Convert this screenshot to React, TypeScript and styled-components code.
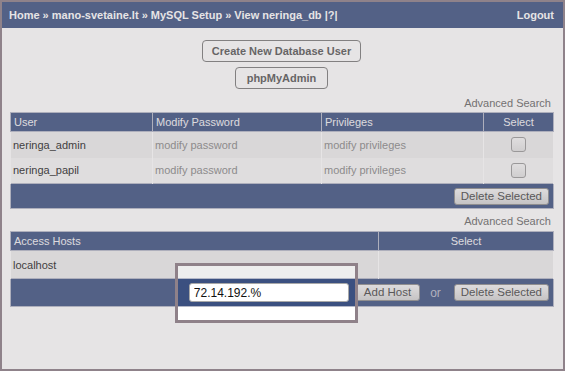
import React from 'react'
import styled, { createGlobalStyle } from 'styled-components'

const GlobalStyle = createGlobalStyle`
  html, body {
    margin: 0;
    padding: 0;
    background: #ffffff;
  }
  body {
    font-family: "Liberation Sans", Arial, sans-serif;
  }
`

const BLUE = '#3b5080'

const Frame = styled.div`
  position: relative;
  width: 565px;
  height: 371px;
  box-sizing: border-box;
  border: 2px solid #8f828a;
  background: #ffffff;
  overflow: hidden;
`

const TopBar = styled.div`
  height: 26px;
  background: ${BLUE};
  display: flex;
  align-items: center;
  justify-content: space-between;
  padding: 0 9px 0 7px;
  color: #ffffff;
  font-size: 11px;
  font-weight: bold;
`

const Content = styled.div`
  padding: 12px 10px 0 8px;
`

const ButtonStack = styled.div`
  display: flex;
  flex-direction: column;
  align-items: center;
  gap: 5px;
`

const PlainButton = styled.button<{ $pad: number }>`
  height: 22px;
  padding: 0 ${p => p.$pad}px;
  border: 1px solid #7a7a7a;
  border-radius: 4px;
  background: transparent;
  color: #555555;
  font-family: "Liberation Sans", Arial, sans-serif;
  font-size: 11px;
  font-weight: bold;
`

const AdvancedSearch = styled.div<{ $top: number; $bottom: number }>`
  margin-top: ${p => p.$top}px;
  margin-bottom: ${p => p.$bottom}px;
  text-align: right;
  font-size: 11px;
  line-height: 14px;
  color: #666666;
  padding-right: 2px;
`

const Table = styled.table`
  width: 543px;
  table-layout: fixed;
  border-collapse: collapse;
  font-size: 11px;
`

const HeadCell = styled.th<{ $center?: boolean }>`
  height: 18px;
  padding: 0 3px;
  background: ${BLUE};
  border: 1px solid #b4b8c8;
  color: #f2f2f6;
  font-weight: normal;
  text-align: ${p => (p.$center ? 'center' : 'left')};
`

const Row = styled.tr<{ $alt?: boolean; $height: number }>`
  height: ${p => p.$height}px;
  background: ${p => (p.$alt ? '#f6f6f6' : '#eeeeee')};
`

const Cell = styled.td<{ $muted?: boolean; $center?: boolean }>`
  padding: 0 3px 0 2px;
  border-left: 1px solid #ffffff;
  border-right: 1px solid #ffffff;
  color: ${p => (p.$muted ? '#888888' : '#222222')};
  text-align: ${p => (p.$center ? 'center' : 'left')};
  vertical-align: middle;
`

const FootCell = styled.td<{ $height: number }>`
  height: ${p => p.$height}px;
  padding: 0 4px 0 0;
  background: ${BLUE};
  border: 1px solid #b4b8c8;
`

const FootBar = styled.div`
  display: flex;
  align-items: center;
  justify-content: flex-end;
`

const GrayButton = styled.button<{ $gap?: number; $pad?: number }>`
  height: 17px;
  margin-left: ${p => p.$gap ?? 0}px;
  padding: 0 ${p => p.$pad ?? 6}px;
  border: 1px solid #8c8c8c;
  border-radius: 3px;
  background: linear-gradient(#f4f4f4, #d4d4d4);
  color: #444444;
  font-family: "Liberation Sans", Arial, sans-serif;
  font-size: 11.5px;
  line-height: 15px;
`

const Check = styled.input.attrs({ type: 'checkbox' })`
  appearance: none;
  display: block;
  margin: 0 auto;
  width: 15px;
  height: 15px;
  box-sizing: border-box;
  border: 1px solid #9a9a9a;
  border-radius: 3px;
  background: linear-gradient(#f6f6f6, #e2e2e2);
`

const HostInput = styled.input`
  width: 160px;
  height: 19px;
  box-sizing: border-box;
  padding: 0 4px;
  border: 1px solid #a8a8a8;
  border-radius: 3px;
  background: #ffffff;
  color: #111111;
  font-family: "Liberation Sans", Arial, sans-serif;
  font-size: 12px;
  outline: none;
`

const OrText = styled.span`
  margin: 0 13px 0 10px;
  color: #b8bccb;
  font-size: 12px;
`

const Spotlight = styled.div`
  position: absolute;
  left: 173px;
  top: 261px;
  width: 183px;
  height: 60px;
  box-sizing: border-box;
  border: 3px solid #8f8189;
  box-shadow: 0 0 0 1200px rgba(156, 147, 151, 0.25);
  pointer-events: none;
`

const users = ['neringa_admin', 'neringa_papil']

export default function App() {
  return (
    <Frame>
      <GlobalStyle />
      <TopBar>
        <span>Home » mano-svetaine.lt » MySQL Setup » View neringa_db |?|</span>
        <span>Logout</span>
      </TopBar>
      <Content>
        <ButtonStack>
          <PlainButton $pad={9}>Create New Database User</PlainButton>
          <PlainButton $pad={11}>phpMyAdmin</PlainButton>
        </ButtonStack>

        <AdvancedSearch $top={7} $bottom={2}>Advanced Search</AdvancedSearch>
        <Table>
          <colgroup>
            <col style={{ width: 142 }} />
            <col style={{ width: 169 }} />
            <col style={{ width: 162 }} />
            <col style={{ width: 70 }} />
          </colgroup>
          <thead>
            <tr>
              <HeadCell>User</HeadCell>
              <HeadCell>Modify Password</HeadCell>
              <HeadCell>Privileges</HeadCell>
              <HeadCell $center>Select</HeadCell>
            </tr>
          </thead>
          <tbody>
            {users.map((u, i) => (
              <Row key={u} $alt={i === 1} $height={26}>
                <Cell>{u}</Cell>
                <Cell $muted>modify password</Cell>
                <Cell $muted>modify privileges</Cell>
                <Cell $center>
                  <Check />
                </Cell>
              </Row>
            ))}
            <tr>
              <FootCell colSpan={4} $height={24}>
                <FootBar>
                  <GrayButton>Delete Selected</GrayButton>
                </FootBar>
              </FootCell>
            </tr>
          </tbody>
        </Table>

        <AdvancedSearch $top={5} $bottom={3}>Advanced Search</AdvancedSearch>
        <Table>
          <colgroup>
            <col style={{ width: 368 }} />
            <col style={{ width: 175 }} />
          </colgroup>
          <thead>
            <tr>
              <HeadCell>Access Hosts</HeadCell>
              <HeadCell $center>Select</HeadCell>
            </tr>
          </thead>
          <tbody>
            <Row $height={28}>
              <Cell>localhost</Cell>
              <Cell />
            </Row>
            <tr>
              <FootCell colSpan={2} $height={27}>
                <FootBar>
                  <HostInput defaultValue="72.14.192.%" />
                  <GrayButton $gap={6} $pad={8}>Add Host</GrayButton>
                  <OrText>or</OrText>
                  <GrayButton>Delete Selected</GrayButton>
                </FootBar>
              </FootCell>
            </tr>
          </tbody>
        </Table>
      </Content>
      <Spotlight />
    </Frame>
  )
}
